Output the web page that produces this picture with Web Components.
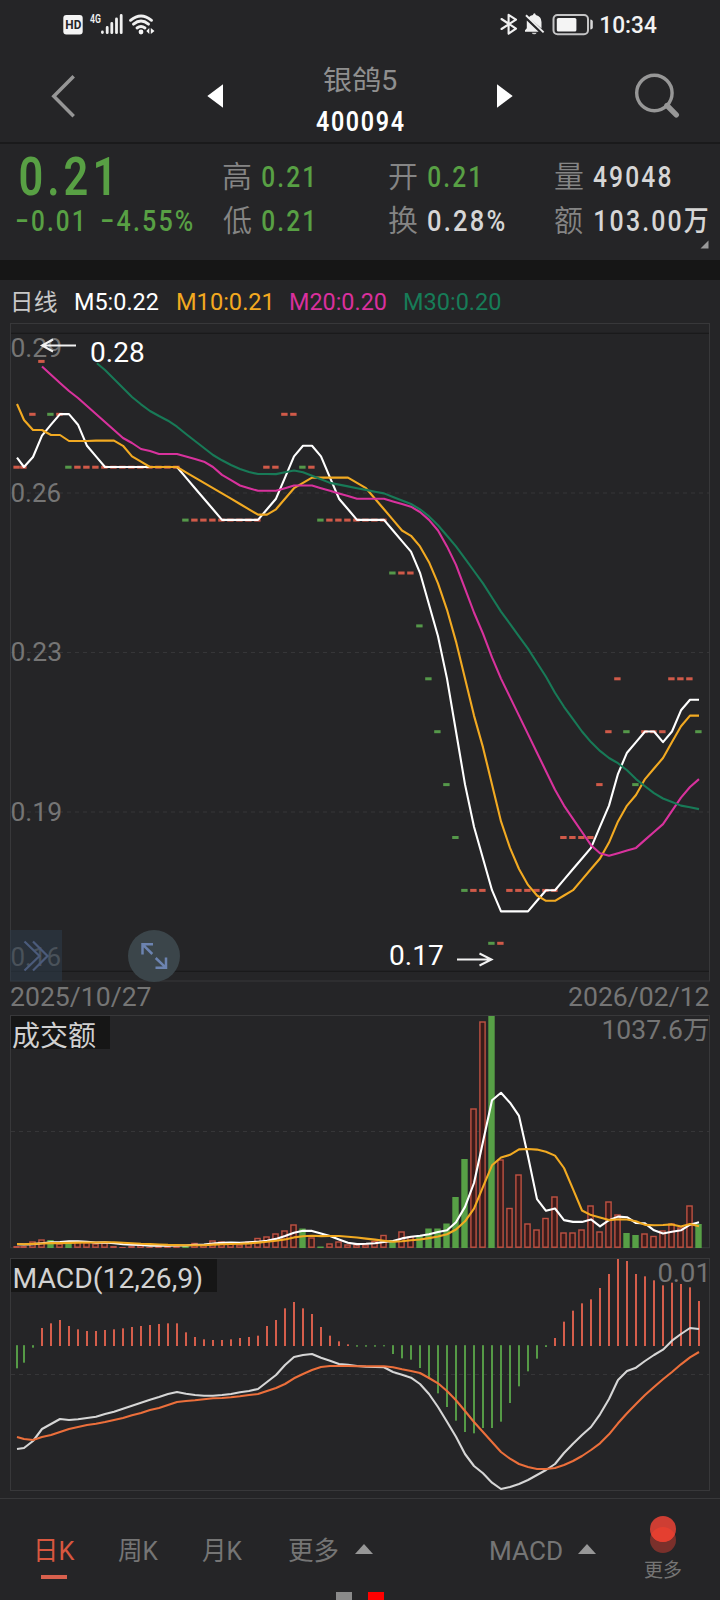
<!DOCTYPE html>
<html lang="zh-CN">
<head>
<meta charset="utf-8">
<title>银鸽5 400094</title>
<style>
body{margin:0;background:#252527;font-family:Roboto,"Noto Sans CJK SC",sans-serif}
</style>
</head>
<body>
<stock-app></stock-app>
<script>
const FAMILY = 'Roboto, "Noto Sans CJK SC", sans-serif';
const measure = document.createElement('canvas').getContext('2d');

// Text whose visible ink starts at x and is exactly `width` wide.
function label(x, y, width, text, size, fill, weight = 400, spacing = 0) {
  measure.font = `${weight} ${size}px ${FAMILY}`;
  measure.letterSpacing = spacing + 'px';
  const m = measure.measureText(text);
  const left = -m.actualBoundingBoxLeft;
  const ink = m.actualBoundingBoxRight - left;
  const k = width / ink;
  return `<text transform="translate(${x - left * k} ${y}) scale(${k} 1)" fill="${fill}" font-family='${FAMILY}' font-size="${size}" font-weight="${weight}" letter-spacing="${spacing}">${text}</text>`;
}

function define(name, css, html) {
  customElements.define(name, class extends HTMLElement {
    constructor() {
      super();
      this.attachShadow({ mode: 'open' }).innerHTML =
        `<style>${css}</style>${typeof html === 'function' ? html(this) : html}`;
    }
  });
}

// The box spans the ink horizontally and cap height to baseline vertically.
customElements.define('fit-text', class extends HTMLElement {
  connectedCallback() {
    if (this.shadowRoot) return;
    const g = (n, d) => this.getAttribute(n) ?? d;
    const size = +g('size', 24), w = +g('w', 50), h = Math.round(size * 0.711);
    this.attachShadow({ mode: 'open' }).innerHTML = `
      <style>:host{display:block;flex:none;width:${w}px;height:${h}px}svg{display:block;overflow:visible}</style>
      <svg width="${w}" height="${h}">${label(0, h, w, g('text', ''), size, 'currentColor', g('weight', 400), +g('ls', 0))}</svg>`;
  }
});

define('status-bar', `
  :host{display:flex;height:48px;box-sizing:border-box;padding:11px 64px 0 60px;justify-content:space-between;color:#f0f0f0}
  svg{display:block;overflow:visible}`, () => `
  <svg width="100" height="28" viewBox="60 11 100 28" fill="#f4f4f4">
    <rect x="63.3" y="15" width="19.4" height="19.6" rx="3"/>
    ${label(65.3, 29.3, 15.6, 'HD', 13, '#252527', 700)}
    ${label(90, 23, 11, '4G', 13, '#f0f0f0', 600)}
    <g stroke="#f0f0f0" stroke-width="2.8" stroke-linecap="round"><path d="M102.4 32v.6M107.2 27.5v5.2M111.8 23.5v9.2M116.5 19v13.7M121.2 15.5v17.2"/></g>
    <g fill="none" stroke="#f0f0f0" stroke-width="2.9" stroke-linecap="round"><path d="M130.5 20.3Q141 11.5 151.5 20.3M133.5 24.2Q141 18 148.5 24.2M137 28Q141 25 145 28"/></g>
    <circle cx="141" cy="32" r="2.4"/><path d="M149.3 28v6l-3-3zM150.8 28v6l3.7-3z"/>
  </svg>
  <svg width="156" height="28" viewBox="500 11 156 28">
    <path d="M501.5 19l14.5 9.6-7.4 5V14.8l7.4 4.8-14.5 9.4" fill="none" stroke="#f0f0f0" stroke-width="2.1" stroke-linejoin="round" stroke-linecap="round"/>
    <path d="M528.5 17.5q2-2.2 4.5-2.6.3-1.6 1.4-1.6t1.4 1.6q5.7 1.2 5.7 7.2v6.4zM526.8 20.4L538.6 31.7H525v-1.4l1.8-2z" fill="#f0f0f0"/>
    <path d="M531.7 32.7h5q-.8 1.6-2.5 1.6t-2.5-1.6z" fill="#d0d0d0"/>
    <path d="M526 15.2l17.6 17.2" stroke="#f0f0f0" stroke-width="1.9"/>
    <rect x="553.5" y="15" width="34.5" height="19.3" rx="4" fill="none" stroke="#c4c4c5" stroke-width="2"/>
    <rect x="556.8" y="18" width="19.6" height="13.5" rx="1.5" fill="#f4f4f4"/>
    <path d="M590.3 19.5q2.5 0 2.5 2v6q0 2-2.5 2z" fill="#d8d8d8"/>
    ${label(600.3, 33, 56.5, '10:34', 23, '#f2f2f2', 500)}
  </svg>`);

define('nav-bar', `
  :host{display:flex;align-items:flex-start;height:94px;box-sizing:border-box;padding-left:51px}
  svg{display:block;flex:none;overflow:visible}
  .title{display:flex;flex:none;flex-direction:column;align-items:center;padding-top:22px;gap:21px;width:90px;margin:0 92px}
  .name{color:#8f8f8f}.code{color:#fff}
  .prev{margin:36px 0 0 126px}.next{margin:36px 121px 0 0}`, `
  <svg width="30" height="60" viewBox="51 48 30 60"><path d="M73.7 76.2L53.8 96.2 73.7 116.2" fill="none" stroke="#969696" stroke-width="3.5"/></svg>
  <svg class="prev" width="16" height="24" viewBox="207 84 16 24"><path d="M207.3 96L223 84.3v23.4z" fill="#fff"/></svg>
  <div class="title">
    <fit-text class="name" text="银鸽5" size="27.5" w="74"></fit-text>
    <fit-text class="code" text="400094" size="28" w="88" weight="600" ls="2"></fit-text>
  </div>
  <svg class="next" width="16" height="24" viewBox="497 84 16 24"><path d="M512.7 96L497 84.3v23.4z" fill="#fff"/></svg>
  <svg width="50" height="60" viewBox="634 48 50 60"><circle cx="654.4" cy="93" r="17.7" fill="none" stroke="#979797" stroke-width="3.4"/><path d="M667 105.5l9.3 9.3" stroke="#979797" stroke-width="5.4" stroke-linecap="round"/></svg>`);

define('quote-pair', `
  :host{display:flex;align-items:flex-end;gap:var(--gap,11px);height:21px}
  fit-text:first-of-type{color:#858585}`, el => {
  const a = n => el.getAttribute(n);
  return `<fit-text text="${a('label')}" size="30" w="28" weight="350"></fit-text><fit-text text="${a('value')}" size="29" w="${a('w')}" weight="500" ls="2.5" style="color:${a('tone')}"></fit-text>`;
});

define('quote-panel', `
  :host{display:grid;grid-template-columns:223px 166px 166px 1fr;height:118px;box-sizing:border-box;border-top:2px solid #1a1a1b}
  .price{padding:13px 0 0 17px;color:#58a044}
  .big{margin-left:3px}
  .chg{display:flex;gap:21px;margin-top:15px}
  .col{display:flex;flex-direction:column;gap:23px;padding-top:22px}
  svg{display:block;margin:-14px 0 0 145px}`, `
  <div class="price"><fit-text class="big" text="0.21" size="53.5" w="89.5" weight="600" ls="5"></fit-text>
    <div class="chg"><fit-text text="−0.01" size="29" w="64" weight="500" ls="2.5"></fit-text><fit-text text="−4.55%" size="29" w="91" weight="500" ls="2.5"></fit-text></div></div>
  <div class="col"><quote-pair label="高" value="0.21" w="49.5" tone="#58a044"></quote-pair><quote-pair label="低" value="0.21" w="49.5" tone="#58a044"></quote-pair></div>
  <div class="col"><quote-pair label="开" value="0.21" w="49.5" tone="#58a044"></quote-pair><quote-pair label="换" value="0.28%" w="77" tone="#d6d6d6"></quote-pair></div>
  <div class="col"><quote-pair style="--gap:10px" label="量" value="49048" w="78" tone="#d6d6d6"></quote-pair><quote-pair style="--gap:12px" label="额" value="103.00万" w="113" tone="#d6d6d6"></quote-pair>
    <svg width="9" height="9"><path d="M8.5 .5v8H.5z" fill="#9a9a9a"/></svg></div>`);

define('ma-legend', `
  :host{display:flex;align-items:flex-start;height:63px;box-sizing:border-box;border-top:20px solid #161616;padding:13px 0 0 13px}
  fit-text+fit-text{margin-left:18px}`, `
  <fit-text text="日线" size="23" w="43.5" style="color:#c8c8c8;margin:1px 0 0 1px"></fit-text>
  <fit-text text="M5:0.22" size="24" w="83.5" style="color:#fff;margin-left:17.5px"></fit-text>
  <fit-text text="M10:0.21" size="24" w="93.5" style="color:#f3a920"></fit-text>
  <fit-text text="M20:0.20" size="24" w="96.5" style="color:#da309d;margin-left:19.5px"></fit-text>
  <fit-text text="M30:0.20" size="24" w="97" style="color:#177c58"></fit-text>`);

/* ---- series ---- */
const xs = i => i ? 15 + 9 * i : 17;
const run = (v, n) => Array(n).fill(v);
const closes = [26,26,27,28,27,27,...run(26,13),...run(25,9),26,26,27,27,26,26,...run(25,8),24,24,24,23,22,21,20,19,18,18,18,17,17,...run(18,6),...run(19,4),20,21,22,21,20,21,21,21,22,22,22,21];
const greens = new Set([4,6,19,32,34,42,45,46,47,48,49,50,53,68,69,76]);
const priceY = c => 361.5 + (28 - c) * 52.9;
function average(data, n, i) { let s = 0; for (let k = i - n + 1; k <= i; k++) s += data[k]; return s / n; }
const poly = (pts, color, w = 2.1) => `<polyline points="${pts.map(p => p[0] + ',' + p[1].toFixed(1)).join(' ')}" fill="none" stroke="${color}" stroke-width="${w}" stroke-linejoin="round"/>`;
function maLine(n, lead, color) {
  const pts = lead.map(([i, y]) => [xs(i), y]);
  for (let i = n - 1; i < 77; i++) pts.push([xs(i), priceY(average(closes, n, i)) - .3]);
  return poly(pts, color);
}
const dash = y => `<path d="M11 ${y}H709" stroke="#363638" stroke-width="1" stroke-dasharray="4 4"/>`;
const frame = (top, bottom) => `<rect x="10.5" y="${top}" width="699" height="${bottom - top}" fill="none" stroke="#38383a"/>`;
const chartCss = h => `:host{display:block;height:${h}px}svg{display:block;overflow:visible}`;

define('price-chart', chartCss(692), () => {
  let s = frame(323.5, 981) + '<path d="M11 333.3H709M11 971.3H709" stroke="#1a1a1b" stroke-width="1.2"/>' + dash(493) + dash(652.5) + dash(812);
  const grey = '#757575';
  s += label(11.5, 357, 49, '0.29', 26, grey) + label(11.5, 502, 49, '0.26', 26, grey) + label(11.5, 661, 49, '0.23', 26, grey)
     + label(11.5, 821, 49, '0.19', 26, grey) + label(11.5, 965.7, 49, '0.16', 26, grey);
  closes.forEach((c, i) => { const x = i ? 14.4 + 9 * i : 16.6; s += `<rect x="${x - 3.2}" y="${priceY(c) - 1.6}" width="6.4" height="3" fill="${greens.has(i) ? '#55984a' : '#d05a49'}"/>`; });
  s += maLine(5, [[0,457.7],[1,467],[2,457],[3,435.7]], '#fff');
  s += maLine(10, [[0,404],[1,420],[2,430],[3,430],[4,435],[5,435],[6,441],[7,441],[8,441]], '#f2aa22');
  s += maLine(20, [[3,366.5],[5,383],[6,391],[7,398],[8,406],[9,414],[10,422],[11,430],[12,438],[13,443],[14,449],[15,451],[16,454],[17,454],[18,454]], '#d8329d');
  s += maLine(30, [[9.1,363.3],[10,370],[12,388],[13,397],[14,404.3],[15,411],[16,416],[17,420.7],[18,426.7],[19,434],[20,441],[21,448],[22,455],[23,460.3],[24,465],[25,469],[26,472],[27,474],[28,474]], '#187a57');
  s += label(91, 362, 53, '0.28', 28, '#fff') + label(390, 965, 53, '0.17', 28, '#fff');
  s += '<path d="M76 345.5H42.5M53 339.5L42 345.5 53 351.5M457 959.5H491M479.5 953.5L491.5 959.5 479.5 965.5" fill="none" stroke="#f2f2f2" stroke-width="2"/>';
  s += '<rect x="10" y="930" width="52" height="51.5" fill="#2d3b47" fill-opacity=".6"/><path d="M24.5 941.5L39.5 956 24.5 970.5M33 941.5L47.5 956 33 970.5" fill="none" stroke="#4b5b7b" stroke-width="2.2"/>';
  s += '<circle cx="154" cy="956" r="26" fill="#3b454a"/><path d="M142.5 954.5V944.3H153M142.8 944.6L152.3 954M155.7 958L165.5 967.3M166 957.5V967.8H155.5" fill="none" stroke="#6c83b0" stroke-width="2.5"/>';
  s += label(11, 1006, 140, '2025/10/27', 26, grey) + label(569, 1006, 140, '2026/02/12', 26, grey);
  return `<svg width="720" height="692" viewBox="0 323 720 692">${s}</svg>`;
});

const turnover = [2,2,6,8,8,4,6,6,5,4,5,2,1,2,3,1,2,2,2.5,3,4.5,3,7,6,5,3,6,9.5,11,14,17,23,19.5,10,1.5,4,6,3,3,3,6.5,12.5,8,16,11,12,19.5,19.5,24.5,51,89,139,226,232,88,39.5,73,24,18,29.5,51,15,15,18,42,16,46,33,15,13,14,11.5,17,24,20,42,24];
define('turnover-chart', chartCss(243), () => {
  let s = frame(1015.5, 1247.7) + dash(1131.5) + '<rect x="11" y="1016" width="99" height="33" fill="#161616"/>';
  turnover.forEach((v, i) => {
    const x = i ? 14.5 + 9 * i : 16.6;
    s += greens.has(i) ? `<rect x="${x - 3.2}" y="${1248 - v}" width="6.4" height="${v}" fill="#57a046"/>`
      : v < 3 ? `<rect x="${x - 3.2}" y="${1248 - v}" width="6.4" height="${v}" fill="#b85043"/>`
      : `<rect x="${x - 2.6}" y="${1248 - v}" width="5.2" height="${v - .8}" fill="#3a1b1a" stroke="#bf5242" stroke-width="1.4"/>`;
  });
  const ext = [...run(3.8, 10), ...turnover];
  for (const [n, c] of [[5, '#fff'], [10, '#f2aa22']]) s += poly(turnover.map((_, i) => [xs(i), 1247.6 - average(ext, n, i + 10)]), c);
  s += label(13, 1045.5, 83, '成交额', 28, '#d0d0d0') + label(603.5, 1039.3, 105, '1037.6万', 26, '#757575');
  return `<svg width="720" height="243" viewBox="0 1015 720 243">${s}</svg>`;
});

// MACD samples are in thirds of a pixel, measured down from y = 1250.
const hist = [355,338,293,234,220,210,228,238,243,243,240,238,235,231,228,225,222,220,220,247,261,268,270,270,268,264,261,257,228,210,175,156,175,192,231,257,274,283,290,290,290,289,312,325,329,354,387,430,471,512,546,550,534,534,515,459,409,364,326,291,264,215,182,160,148,114,72,27,33,72,79,91,106,98,102,112,153];
const dif = [597,594,573,537,522,507,510,508,504,500,492,485,476,467,458,449,441,432,426,431,435,437,437,435,432,427,423,417,396,375,345,321,315,312,323,332,342,344,348,350,351,352,366,374,383,402,432,471,515,560,612,648,670,698,717,711,702,690,675,660,642,609,581,555,531,493,447,390,363,353,333,315,299,272,252,234,237];
const dea = [561,567,570,561,555,546,537,531,525,521,516,510,504,496,489,480,474,465,456,453,451,448,445,444,442,439,435,432,423,414,402,385,372,360,351,348,348,348,349,349,349,349,352,358,363,369,384,400,423,451,483,516,546,576,606,626,642,651,657,657,654,645,633,618,600,580,553,520,490,462,435,411,388,366,343,322,306];
define('macd-chart', chartCss(240), () => {
  const y = v => 1250 + v / 3;
  let s = frame(1258.5, 1490.5) + dash(1374.5) + '<rect x="11" y="1259" width="206" height="33" fill="#161616"/>';
  hist.forEach((v, i) => { const up = v < 287; s += `<rect x="${xs(i) - 1}" y="${up ? y(v) : 1345.2}" width="2" height="${up ? 1346 - y(v) : y(v) - 1345.2}" fill="${up ? '#d65e4b' : '#559a46'}"/>`; });
  s += poly(dif.map((v, i) => [xs(i), y(v)]), '#d6d6d6') + poly(dea.map((v, i) => [xs(i), y(v)]), '#ec6f3b');
  s += label(14.5, 1287.7, 187, 'MACD(12,26,9)', 28, '#d2d2d2') + label(658.5, 1282, 47.5, '0.01', 26, '#757575');
  return `<svg width="720" height="240" viewBox="0 1258 720 240">${s}</svg>`;
});

define('tool-bar', `
  :host{display:flex;height:102px;box-sizing:border-box;border-top:1px solid #38383a;align-items:flex-start;padding:43px 37px 0 37px;color:#757575;position:relative}
  .tab{display:flex;flex-direction:column}
  .on{color:#d8573f}
  .on i{display:block;width:26px;height:4px;background:#d8604d;margin:15px 0 0 4px}
  svg{display:block;flex:none;overflow:visible}
  .more{display:flex;flex-direction:column;margin:-27px 0 0 48px;align-items:center}
  .dots{position:absolute;left:336px;bottom:0;display:flex;gap:16px}
  .dots i{width:16px;height:8px;background:#8a8a8a}
  .dots i+i{background:#f00}`, `
  <div class="tab on"><fit-text text="日K" size="26" w="38"></fit-text><i></i></div>
  <fit-text text="周K" size="26" w="40.5" style="margin-left:42.5px"></fit-text>
  <fit-text text="月K" size="26" w="40.5" style="margin-left:44px"></fit-text>
  <fit-text text="更多" size="26" w="49" style="margin-left:46px"></fit-text>
  <svg width="18" height="10" style="margin:2px 0 0 17px"><path d="M0 10L9 0l9 10z" fill="#979797"/></svg>
  <fit-text text="MACD" size="26" w="71" style="margin-left:118.5px"></fit-text>
  <svg width="18" height="10" style="margin:2px 0 0 16px"><path d="M0 10L9 0l9 10z" fill="#979797"/></svg>
  <div class="more">
    <svg width="38" height="38" viewBox="645 1515 38 38"><clipPath id="c"><circle cx="664" cy="1529" r="13"/></clipPath><circle cx="664" cy="1540" r="13" fill="#7a302b"/><circle cx="664" cy="1529" r="13" fill="#ce3e33"/><circle cx="664" cy="1540" r="13" fill="#e43f30" clip-path="url(#c)"/></svg>
    <fit-text text="更多" size="19.5" w="37.5" style="margin:10px 0 0 -1px"></fit-text>
  </div>
  <div class="dots"><i></i><i></i></div>`);

define('stock-app', `:host{display:flex;flex-direction:column;width:720px;height:1600px;overflow:hidden;background:#252527}`, `
  <status-bar></status-bar><nav-bar></nav-bar><quote-panel></quote-panel><ma-legend></ma-legend>
  <price-chart></price-chart><turnover-chart></turnover-chart><macd-chart></macd-chart><tool-bar></tool-bar>`);
</script>
</body>
</html>
